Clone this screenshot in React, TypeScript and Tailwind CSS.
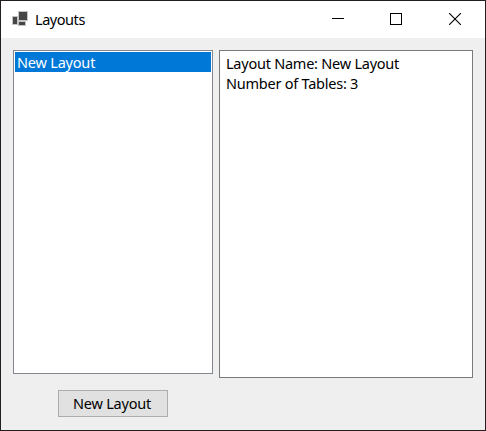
function AppIcon() {
  return (
    <svg width="18" height="18" viewBox="11 10 18 18" shapeRendering="crispEdges" aria-hidden="true">
      <path fill="#c4c4c4" d="M18 11h10v10h-10zM12 16h6v9h-6zM18 21h8v4.5h-8z" />
      <path fill="#464646" d="M19 12h8v8h-8zM13 17h4v7h-4zM19 22h6v3h-6z" />
    </svg>
  );
}

function TitleBar() {
  return (
    <header className="flex h-[37px] shrink-0 items-start bg-white pl-[10px]">
      <div className="pt-[9px]">
        <AppIcon />
      </div>
      <h1 className="ml-[6px] mt-[8px] grow text-[14.5px] leading-5 tracking-[-0.45px]">Layouts</h1>
      <div className="flex gap-[46px] pr-[24px] pt-[12px]">
        <svg width="12" height="12" shapeRendering="crispEdges" role="img" aria-label="Minimize">
          <path d="M0 5.5h12" stroke="#000" />
        </svg>
        <svg width="12" height="12" shapeRendering="crispEdges" role="img" aria-label="Maximize">
          <path d="M.5 .5h11v11h-11z" fill="none" stroke="#000" />
        </svg>
        <svg className="ml-px" width="12" height="12" role="img" aria-label="Close">
          <path d="M0 0l12 12M12 0l-12 12" stroke="#000" strokeWidth="1.1" />
        </svg>
      </div>
    </header>
  );
}

export default function App() {
  return (
    <div className="flex h-[431px] w-[486px] flex-col border border-[#231f20] bg-[#efefef] font-['Noto_Sans','Open_Sans',sans-serif] text-[14.5px] text-black">
      <TitleBar />
      <main className="flex items-start gap-[6px] pl-[12px] pt-[12px]">
        <section className="flex w-[200px] flex-col items-center">
          <ul className="h-[324px] w-full border border-[#828790] bg-white p-px">
            <li className="h-5 bg-[#0078d7] pl-[2px] leading-5 tracking-[-0.2px] text-white">New Layout</li>
          </ul>
          <button className="mt-4 h-[27px] w-[110px] border border-[#adadad] bg-[#e1e1e1] pb-[2px] pr-[2px] leading-5 tracking-[-0.2px]">
            New Layout
          </button>
        </section>
        <section className="h-[328px] w-[254px] border border-[#7a7a7a] bg-white pl-[6px] pt-[2px] leading-5 tracking-[-0.24px]">
          <p>Layout Name: New Layout</p>
          <p>Number of Tables: 3</p>
        </section>
      </main>
    </div>
  );
}
